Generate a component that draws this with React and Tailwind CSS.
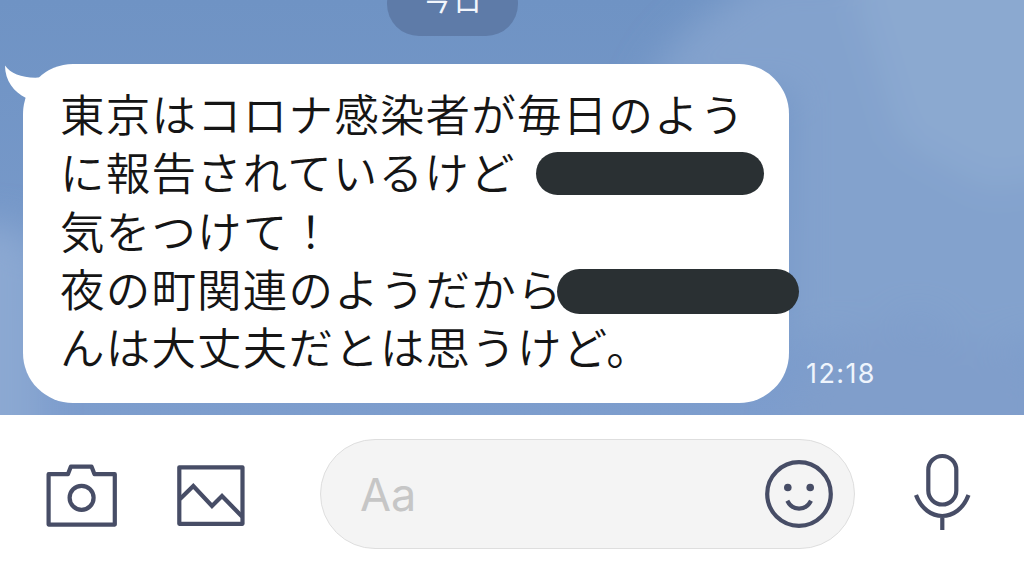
import React from 'react'

const messageLines = [
    { text: '東京はコロナ感染者が毎日のよう' },
    { text: 'に報告されているけど', mask: 'ml-[20px] mt-[4px] h-[43px] w-[228px]' },
    { text: '気をつけて！' },
    { text: '夜の町関連のようだから', mask: '-ml-[6px] mt-[6px] h-[45px] w-[242px]' },
    { text: 'んは大丈夫だとは思うけど。' },
]

const CameraIcon = () => (
    <svg className="h-[64px] w-[72px]" viewBox="0 0 72 64" fill="none" stroke="#474d66" strokeWidth="4.2" strokeLinejoin="round">
        <path d="M2.6 11.2h19.3l3-7.6h20.6l3 7.6h20.3v50.4H2.6z" />
        <circle cx="35.6" cy="34.8" r="12" />
    </svg>
)

const PictureIcon = () => (
    <svg className="h-[62px] w-[68px]" viewBox="0 0 68 62" fill="none" stroke="#474d66" strokeWidth="4.2" strokeLinejoin="round">
        <rect x="2.3" y="3.3" width="63.2" height="56.5" />
        <path d="M3 35l13.3-13L35 42l10-10 20 20.5" strokeLinejoin="miter" />
    </svg>
)

const SmileIcon = () => (
    <svg className="h-[70px] w-[70px]" viewBox="0 0 70 70" fill="none" stroke="#474d66" strokeWidth="4.2">
        <circle cx="35" cy="35" r="31.8" />
        <circle cx="23.8" cy="28.5" r="3.8" fill="#474d66" stroke="none" />
        <circle cx="46.2" cy="28.5" r="3.8" fill="#474d66" stroke="none" />
        <path d="M23.3 41.8c5.2 10.4 18.3 10.4 23.7 0" />
    </svg>
)

const MicIcon = () => (
    <svg className="h-[78px] w-[58px]" viewBox="0 0 58 78" fill="none" stroke="#474d66" strokeWidth="4.2">
        <rect x="15.3" y="3" width="28" height="48.5" rx="14" />
        <path d="M3 42c10.5 28 42 28 52.5 0M29.3 62v15" />
    </svg>
)

const Sky = () => (
    <svg className="absolute inset-0 h-full w-full" viewBox="0 0 1024 415" preserveAspectRatio="none">
        <defs>
            <linearGradient id="sky" x1="0" y1="0" x2="0" y2="1">
                <stop offset="0" stopColor="#6f93c4" />
                <stop offset="1" stopColor="#7d9dcd" />
            </linearGradient>
            <filter id="soft" x="-50%" y="-50%" width="200%" height="200%">
                <feGaussianBlur stdDeviation="18" />
            </filter>
        </defs>
        <rect width="1024" height="415" fill="url(#sky)" />
        <g filter="url(#soft)">
            <path d="M640 100L665 55 700 18 770 -30h300v370l-90 10-60-30-130 30V90z" fill="#83a2cd" />
            <path d="M840-60h280v220l-130 30-90-50z" fill="#8ba9d0" />
            <path d="M780 440l20-60 70-55 70 10 110 30v90z" fill="#809ecb" />
            <path d="M-60 225l70 0 30 25v230h-100z" fill="#8ba8d2" />
        </g>
    </svg>
)

const App = () => {
    return (
        <div className="flex h-[569px] w-[1024px] flex-col overflow-hidden bg-white font-['Noto_Sans_CJK_JP',sans-serif]">
            <main className="relative h-[415px] overflow-hidden">
                <Sky />
                <div className="relative ml-[387px] -mt-[28px] flex h-[64px] w-[131px] items-center justify-center rounded-[32px] bg-[#5e7ba8] pb-[15px] text-[30px] leading-none text-[#f2f6fc]">
                    今日
                </div>
                <div className="relative mt-[28px] flex items-end">
                    <div className="relative ml-[23px] h-[339px] w-[766px] rounded-[50px] bg-white pl-[37px] pt-[20px]">
                        <svg className="absolute -left-[18px] top-0 h-[40px] w-[60px]" viewBox="0 0 60 40" fill="white">
                            <path d="M0 1.5C6 10 18 14.5 35 13.5L50 8V40H20L21 34C9 28 0 17 0 1.5z" />
                        </svg>
                        {messageLines.map((line, index) => (
                            <div key={index} className="flex h-[58.3px] items-center whitespace-nowrap text-[44.5px] leading-[56px] font-[350] tracking-[1.2px] text-[#151515]">
                                <span>{line.text}</span>
                                {line.mask && <span className={`shrink-0 rounded-full bg-[#2a3033] ${line.mask}`} />}
                            </div>
                        ))}
                    </div>
                    <span className="mb-[14px] ml-[17px] font-[Inter,sans-serif] text-[27px] leading-[30px] tracking-[1.4px] text-[#eef4fc]">12:18</span>
                </div>
            </main>
            <footer className="flex h-[154px] items-start bg-white">
                <div className="ml-[46px] mt-[48px]"><CameraIcon /></div>
                <div className="ml-[59px] mt-[49px]"><PictureIcon /></div>
                <div className="ml-[75px] mt-[24px] flex h-[110px] w-[535px] items-center justify-between rounded-full border border-[#dedede] bg-[#f4f4f4] pl-[39px] pr-[20px]">
                    <span className="font-[Inter,sans-serif] text-[45px] leading-none text-[#c6c6c6]">Aa</span>
                    <SmileIcon />
                </div>
                <div className="ml-[58px] mt-[38px]"><MicIcon /></div>
            </footer>
        </div>
    )
}

export default App
